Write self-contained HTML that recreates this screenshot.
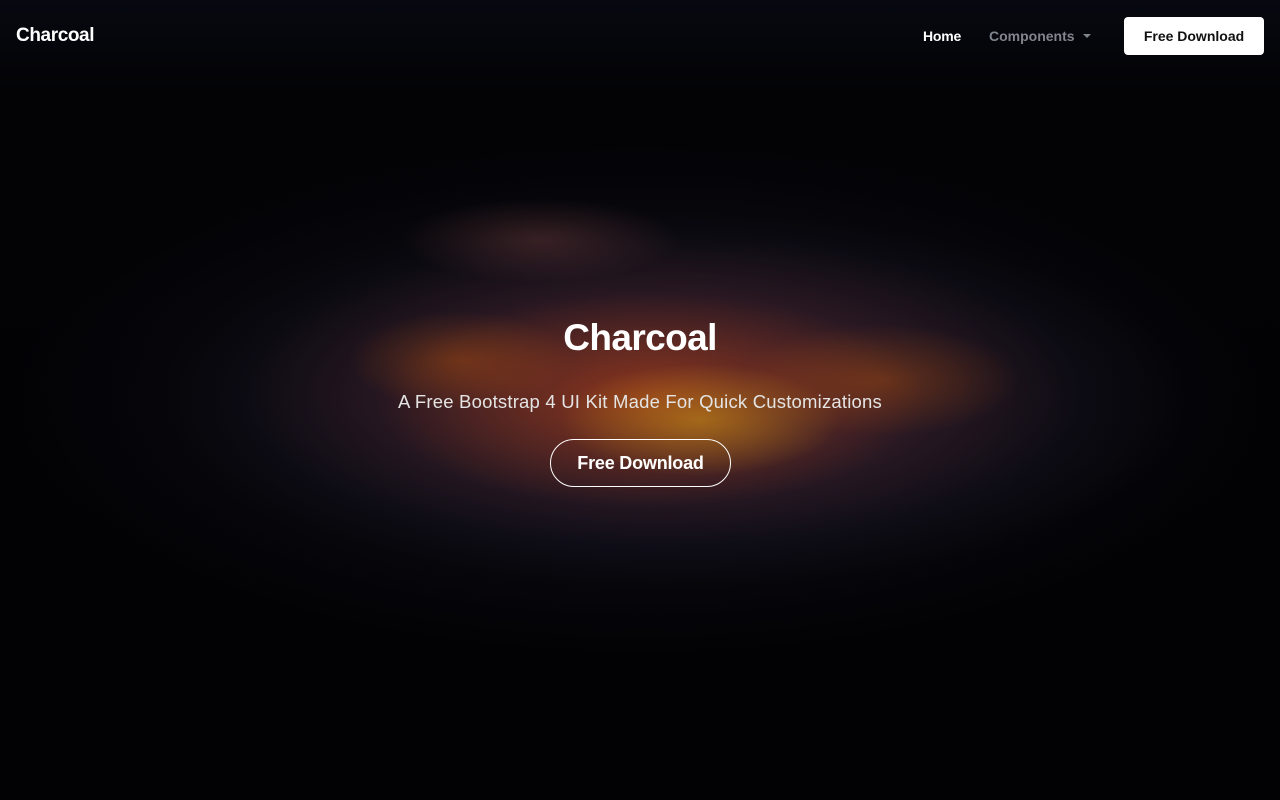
<!DOCTYPE html>
<html><head><meta charset="utf-8"><style>
html,body{margin:0;height:100%;}
body{width:1280px;height:800px;overflow:hidden;font-family:"Liberation Sans",sans-serif;color:#fff;position:relative;
background:#020204;}
.bg{position:absolute;inset:0;
background:
radial-gradient(ellipse 200px 80px at 700px 420px, rgba(210,160,20,0.5), transparent 70%),
radial-gradient(ellipse 160px 70px at 460px 360px, rgba(200,90,10,0.35), transparent 70%),
radial-gradient(ellipse 200px 80px at 880px 380px, rgba(200,90,10,0.35), transparent 70%),
radial-gradient(ellipse 380px 150px at 650px 400px, rgba(200,70,10,0.5), transparent 72%),
radial-gradient(ellipse 200px 60px at 540px 240px, rgba(110,60,60,0.45), transparent 70%),
radial-gradient(ellipse 540px 200px at 660px 390px, rgba(110,40,40,0.55), transparent 78%),
radial-gradient(ellipse 600px 220px at 680px 400px, rgba(50,40,65,0.65), transparent 85%),
radial-gradient(ellipse 680px 280px at 640px 400px, rgba(18,18,30,0.9), transparent 92%),
linear-gradient(#070910 0,#030306 90px,#020204 100%);}
nav{position:absolute;top:0;left:0;right:0;height:72px;}
.brand{position:absolute;left:16px;top:25px;font-size:19px;font-weight:bold;letter-spacing:-0.4px;}
.home{position:absolute;left:923px;top:28px;font-size:14px;font-weight:bold;letter-spacing:-0.2px;}
.comp{position:absolute;left:989px;top:28px;font-size:14px;font-weight:bold;color:#80848c;}
.comp:after{content:"";display:inline-block;margin-left:8px;vertical-align:3px;border-top:4px solid #80848c;border-left:4px solid transparent;border-right:4px solid transparent;}
.btn{position:absolute;left:1124px;top:17px;width:140px;height:38px;background:#fff;color:#111;border-radius:4px;font-size:14px;font-weight:bold;text-align:center;line-height:38px;}
h1{position:absolute;top:317px;left:0;right:0;text-align:center;margin:0;font-size:37px;font-weight:bold;letter-spacing:-0.6px;}
p{position:absolute;top:391px;left:0;right:0;text-align:center;margin:0;font-size:18.5px;color:#e4e4e4;letter-spacing:0.2px;}
.cta{position:absolute;left:550px;top:439px;width:179px;height:46px;border:1px solid #fff;border-radius:24px;text-align:center;line-height:46px;font-size:18px;font-weight:bold;letter-spacing:-0.2px;}
</style></head><body>
<div class="bg"></div>
<nav><div class="brand">Charcoal</div><div class="home">Home</div><div class="comp">Components</div><div class="btn">Free Download</div></nav>
<h1>Charcoal</h1>
<p>A Free Bootstrap 4 UI Kit Made For Quick Customizations</p>
<div class="cta">Free Download</div>
</body></html>
